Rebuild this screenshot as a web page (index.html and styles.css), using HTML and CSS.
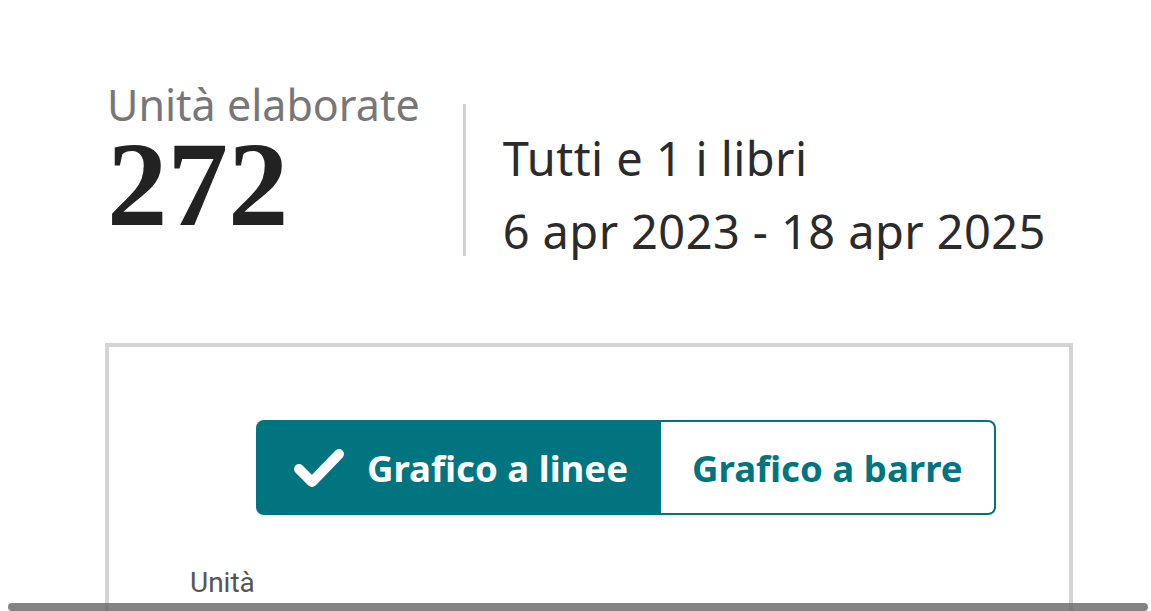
FILE: index.html
```html
<!DOCTYPE html>
<html lang="it">

<head>
    <meta charset="UTF-8">
    <meta name="viewport" content="width=device-width, initial-scale=1.0">
    <title>Unità elaborate</title>

    <link rel="stylesheet" href="styles.css">
</head>

<body>
    <div class="summary">
        <div class="total">
            <p class="total-label">Unità elaborate</p>
            <p class="total-value">272</p>
        </div>
        <div class="divider"></div>
        <div class="range">
            <p>Tutti e 1 i libri</p>
            <p>6 apr 2023 - 18 apr 2025</p>
        </div>
    </div>

    <div class="card">
        <div class="toggle">
            <button class="toggle-btn active">
                <svg class="check" viewBox="0 0 52 42" width="52" height="42">
                    <path d="M6 22 L19 35 L46 7" fill="none" stroke="white" stroke-width="10" stroke-linecap="round" stroke-linejoin="round" />
                </svg>
                Grafico a linee
            </button>
            <button class="toggle-btn">Grafico a barre</button>
        </div>
        <p class="axis-label">Unità</p>
    </div>

    <div class="scrollbar"></div>
</body>

</html>
```

FILE: styles.css
```css
* {
    margin: 0;
    padding: 0;
    box-sizing: border-box;
}

body {
    background: white;
    font-family: "Noto Sans", sans-serif;
    overflow: hidden;
    height: 611px;
}

.summary {
    display: flex;
    padding: 78px 0 0 107px;
}

.total-label {
    font-size: 43px;
    color: #777;
    line-height: 53px;
}

.total-value {
    font-family: "Liberation Serif", serif;
    font-weight: bold;
    font-size: 121px;
    line-height: 107px;
    color: #222;
}

.divider {
    width: 3px;
    height: 152px;
    background-color: #d2d2d2;
    margin: 26px 37px 0 43px;
}

.range {
    padding-top: 44px;
    font-size: 47px;
    line-height: 73px;
    letter-spacing: 0.4px;
    color: #2b2b2b;
}

.card {
    margin: 75px 0 0 105px;
    width: 968px;
    height: 300px;
    border: 4px solid #d4d4d4;
    border-bottom: none;
    padding-top: 73px;
}

.toggle {
    display: flex;
    margin-left: 147px;
}

.toggle-btn {
    display: flex;
    align-items: center;
    height: 95px;
    padding: 0 31px;
    font-family: "Noto Sans", sans-serif;
    font-weight: bold;
    font-size: 36.6px;
    color: #00757f;
    background-color: white;
    border: 2px solid #00757f;
    border-left: none;
    border-radius: 0 8px 8px 0;
}

.toggle-btn.active {
    color: white;
    background-color: #00757f;
    border: none;
    border-radius: 8px 0 0 8px;
    padding: 0 33px 0 37px;
}

.check {
    margin-right: 22px;
}

.axis-label {
    margin: 51px 0 0 81px;
    font-family: "Roboto", sans-serif;
    font-size: 28px;
    color: #555;
}

.scrollbar {
    position: fixed;
    left: 8px;
    right: 3px;
    bottom: 0;
    height: 8px;
    border-radius: 4px;
    background-color: rgba(100, 100, 100, 0.8);
}
```
